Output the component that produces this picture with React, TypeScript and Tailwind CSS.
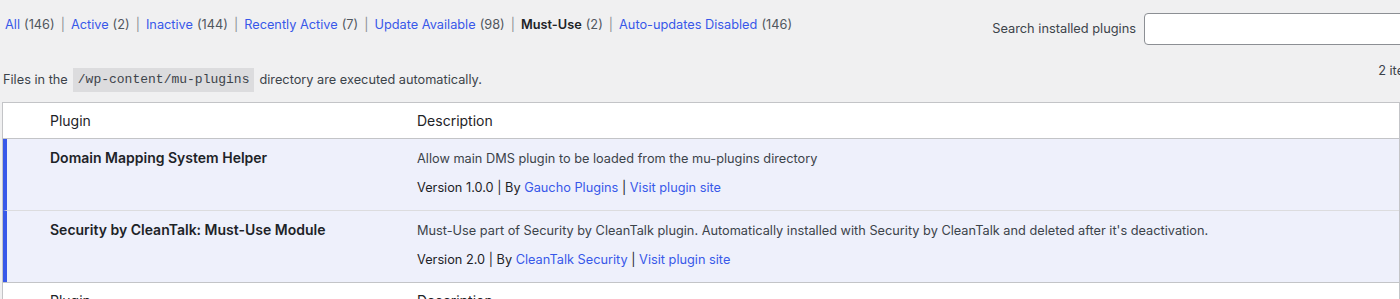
import React from 'react';

const filters = [
  { label: 'All', count: 146 },
  { label: 'Active', count: 2 },
  { label: 'Inactive', count: 144 },
  { label: 'Recently Active', count: 7 },
  { label: 'Update Available', count: 98 },
  { label: 'Must-Use', count: 2, current: true },
  { label: 'Auto-updates Disabled', count: 146 },
];

const plugins = [
  {
    name: 'Domain Mapping System Helper',
    description: 'Allow main DMS plugin to be loaded from the mu-plugins directory',
    version: '1.0.0',
    author: 'Gaucho Plugins',
  },
  {
    name: 'Security by CleanTalk: Must-Use Module',
    description:
      "Must-Use part of Security by CleanTalk plugin. Automatically installed with Security by CleanTalk and deleted after it's deactivation.",
    version: '2.0',
    author: 'CleanTalk Security',
  },
];

const HeaderRow: React.FC<{ top?: boolean }> = ({ top }) => (
  <div
    className={`flex h-[36px] items-center bg-white text-[14px] text-[#1d2327] ${
      top ? 'border-b border-[#c3c4c7]' : 'border-t border-[#c3c4c7]'
    }`}
  >
    <div className="w-[47px] shrink-0" />
    <div className="w-[367px] shrink-0">Plugin</div>
    <div>Description</div>
  </div>
);

export default function App() {
  return (
    <div
      className="min-h-screen overflow-hidden bg-[#f0f0f1] text-[#1d2327]"
      style={{ fontFamily: 'Inter, "Noto Sans", sans-serif' }}
    >
      {/* Filter links + search */}
      <div className="flex h-[58px] items-start justify-between">
        <ul className="flex items-center pl-[5px] pt-[15px] text-[12.75px] text-[#50575e]">
          {filters.map((f, i) => (
            <li key={f.label} className="flex items-center">
              {f.current ? (
                <span className="font-semibold text-[#1d2327]">{f.label}</span>
              ) : (
                <a className="text-[#3858e9]">{f.label}</a>
              )}
              <span className="ml-[4px]">({f.count})</span>
              {i < filters.length - 1 && <span className="mx-[6px] text-[#8c8f94]">|</span>}
            </li>
          ))}
        </ul>
        <div className="flex items-center pt-[13px]">
          <label className="mr-[8px] text-[12.8px] text-[#3c434a]">Search installed plugins</label>
          <input
            type="text"
            className="h-[32px] w-[270px] -mr-[14px] rounded-[4px] border border-[#8c8f94] bg-white"
          />
        </div>
      </div>

      {/* Notice + count */}
      <div className="flex h-[44px] items-start justify-between">
        <p className="flex items-center pl-[3px] pt-[10px] text-[12.75px] text-[#3c434a]">
          Files in the
          <code
            className="mx-[5px] bg-[#dcdcde] px-[5px] py-[2px] text-[13px] text-[#3c434a]"
            style={{ fontFamily: '"Liberation Mono", "DejaVu Sans Mono", monospace' }}
          >
            /wp-content/mu-plugins
          </code>
          directory are executed automatically.
        </p>
        <span className="-mr-[22px] pt-[3px] text-[12.75px] text-[#3c434a]">2 items</span>
      </div>

      {/* Table */}
      <div className="ml-[2px] border border-[#c3c4c7] bg-white">
        <HeaderRow top />
        {plugins.map((p, i) => (
          <div
            key={p.name}
            className={`flex border-l-[4px] border-[#3858e9] bg-[#eef0fb] ${
              i > 0 ? 'h-[72px] border-t border-t-[#dcdcde]' : 'h-[71px]'
            }`}
          >
            <div className="w-[43px] shrink-0" />
            <div className="w-[367px] shrink-0 pt-[8px] text-[14px] font-semibold text-[#1d2327]">
              {p.name}
            </div>
            <div className="pt-[10px] text-[12.75px] text-[#3c434a]">
              <p>{p.description}</p>
              <p className="mt-[10px] text-[12.75px] text-[#1d2327]">
                Version {p.version} | By <a className="text-[#3858e9]">{p.author}</a> |{' '}
                <a className="text-[#3858e9]">Visit plugin site</a>
              </p>
            </div>
          </div>
        ))}
        <HeaderRow />
      </div>
    </div>
  );
}
